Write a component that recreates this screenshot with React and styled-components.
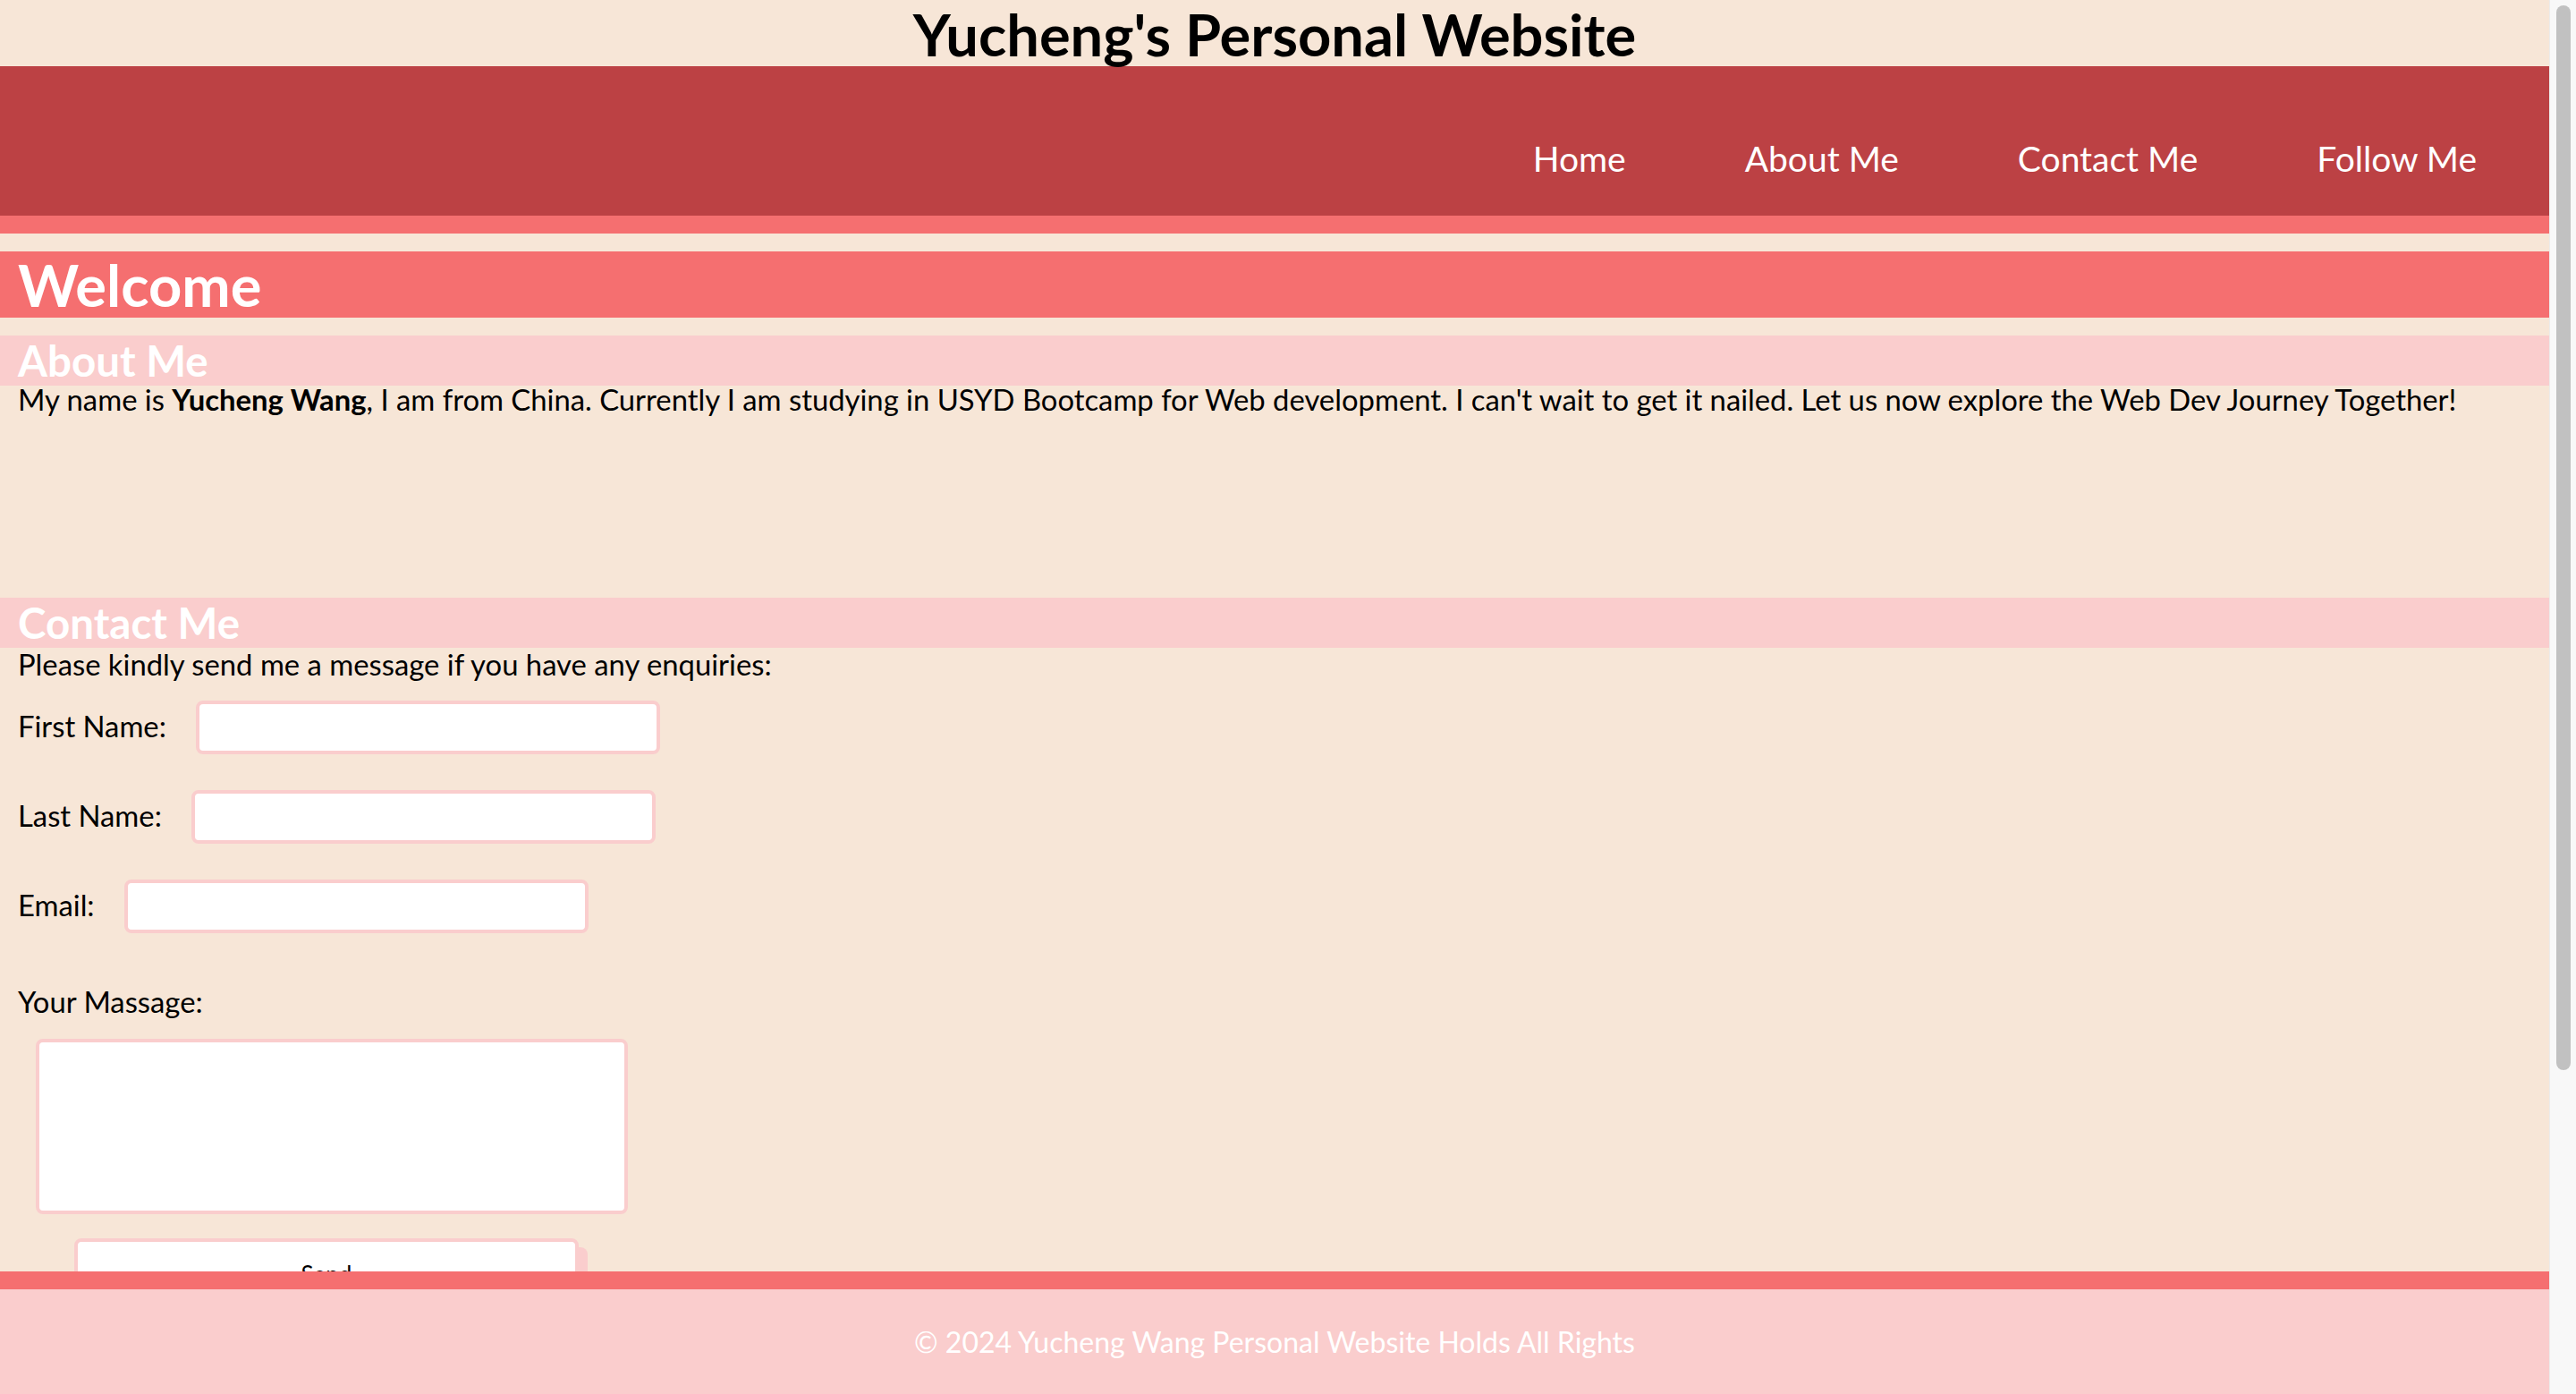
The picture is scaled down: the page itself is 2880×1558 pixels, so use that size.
import React from "react";
import styled, { createGlobalStyle } from "styled-components";

const GlobalStyle = createGlobalStyle`
  html, body {
    margin: 0;
    height: 100%;
    overflow: hidden;
  }
  body {
    background: #f7e6d7;
    font-family: "Lato", "Liberation Sans", sans-serif;
    font-size: 32.8px;
    color: #000;
  }
`;

// page = scrolled column + a styled scroll rail on the right
const Page = styled.div`
  display: flex;
  height: 100vh;
`;

const Column = styled.div`
  flex: 1;
  min-width: 0;
  display: flex;
  flex-direction: column;
`;

const Viewport = styled.div`
  flex: 1;
  overflow: hidden;
`;

const ScrollRail = styled.div`
  width: 30px;
  box-sizing: border-box;
  background: #f8f8f8;
  border-left: 1px solid #ececec;
  padding: 6px 6px 0 7px;
`;

const ScrollThumb = styled.div`
  height: 1190px;
  border-radius: 8px;
  background: #c1c1c1;
`;

const Header = styled.header`
  border-bottom: 20px solid #f56f70;
`;

const SiteTitle = styled.h1`
  margin: 0;
  height: 74px;
  line-height: 77px;
  font-size: 65px;
  font-weight: 700;
  text-align: center;
`;

const NavBar = styled.nav`
  height: 167px;
  box-sizing: border-box;
  padding: 79px 81px 0 0;
  background: #bc4144;
  display: flex;
  justify-content: flex-end;
  align-items: flex-start;
  gap: 133px;
`;

const NavLink = styled.a`
  color: #fff;
  text-decoration: none;
  font-size: 39px;
  line-height: 49px;
`;

const Main = styled.main`
  padding: 20px 0 560px;
`;

const Banner = styled.h2`
  margin: 0;
  padding-left: 20px;
  color: #fff;
  font-weight: 700;
  background: ${(props) => (props.$strong ? "#f56f70" : "#facdcd")};
  font-size: ${(props) => (props.$strong ? "65px" : "47.5px")};
  height: ${(props) => (props.$strong ? "74px" : "56px")};
  line-height: ${(props) => (props.$strong ? "74px" : "56px")};
`;

const Section = styled.section`
  margin-top: 20px;
  min-height: ${(props) => props.$minHeight || "auto"};
`;

const Text = styled.p`
  margin: ${(props) => props.$margin || "0"};
  padding-left: 20px;
  line-height: 1;
`;

const Form = styled.form`
  display: flex;
  flex-direction: column;
  align-items: flex-start;
  padding-left: 20px;
  margin-top: 23px;
`;

const Field = styled.div`
  display: flex;
  align-items: center;
  gap: 33px;
  margin-bottom: 40px;
`;

const Label = styled.label`
  line-height: 1;
`;

const Input = styled.input`
  width: 519px;
  height: 60px;
  box-sizing: border-box;
  border: 4px solid #facdcd;
  border-radius: 8px;
  background: #fff;
  outline: none;
`;

const MessageLabel = styled.label`
  margin-top: 21px;
  line-height: 1;
`;

const MessageBox = styled.textarea`
  margin: 24px 0 0 20px;
  width: 662px;
  height: 196px;
  box-sizing: border-box;
  border: 4px solid #facdcd;
  border-radius: 8px;
  background: #fff;
  resize: none;
  outline: none;
`;

const SendButton = styled.button`
  margin: 27px 0 0 63px;
  width: 564px;
  height: 80px;
  box-sizing: border-box;
  border: 4px solid #facdcd;
  border-radius: 8px;
  background: #fff;
  box-shadow: 10px 10px 0 #facdcd;
  font-family: "Lato", "Liberation Sans", sans-serif;
  font-size: 26px;
  color: #000;
  padding: 0;
`;

const Footer = styled.footer`
  flex: none;
  height: 137px;
  box-sizing: border-box;
  border-top: 20px solid #f56f70;
  background: #facdcd;
  color: #fff;
  display: flex;
  align-items: center;
  justify-content: center;
  font-size: 32px;
`;

const fields = [
  { id: "first", label: "First Name:", type: "text" },
  { id: "last", label: "Last Name:", type: "text" },
  { id: "email", label: "Email:", type: "email" },
];

export default function App() {
  return (
    <>
      <GlobalStyle />
      <Page>
        <Column>
          <Viewport>
            <Header>
              <SiteTitle>Yucheng's Personal Website</SiteTitle>
              <NavBar>
                <NavLink href="#home">Home</NavLink>
                <NavLink href="#about">About Me</NavLink>
                <NavLink href="#contact">Contact Me</NavLink>
                <NavLink href="#follow">Follow Me</NavLink>
              </NavBar>
            </Header>
            <Main>
              <Banner $strong id="home">Welcome</Banner>
              <Section id="about" $minHeight="273px">
                <Banner>About Me</Banner>
                <Text>
                  My name is <b>Yucheng Wang</b>, I am from China. Currently I
                  am studying in USYD Bootcamp for Web development. I can't wait
                  to get it nailed. Let us now explore the Web Dev Journey
                  Together!
                </Text>
              </Section>
              <Section id="contact">
                <Banner>Contact Me</Banner>
                <Text $margin="3px 0 0">
                  Please kindly send me a message if you have any enquiries:
                </Text>
                <Form onSubmit={(e) => e.preventDefault()}>
                  {fields.map((f) => (
                    <Field key={f.id}>
                      <Label htmlFor={f.id}>{f.label}</Label>
                      <Input id={f.id} type={f.type} />
                    </Field>
                  ))}
                  <MessageLabel htmlFor="message">Your Massage:</MessageLabel>
                  <MessageBox id="message" />
                  <SendButton type="submit">Send</SendButton>
                </Form>
              </Section>
            </Main>
          </Viewport>
          <Footer>© 2024 Yucheng Wang Personal Website Holds All Rights</Footer>
        </Column>
        <ScrollRail>
          <ScrollThumb />
        </ScrollRail>
      </Page>
    </>
  );
}
